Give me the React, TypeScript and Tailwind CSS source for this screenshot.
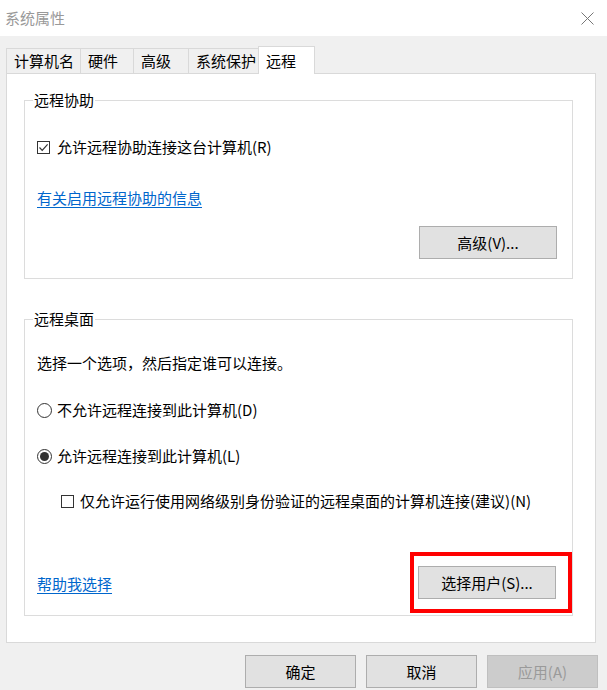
import React from 'react';

const font = { fontFamily: '"Noto Sans CJK SC", "Microsoft YaHei", sans-serif' };

const tabs = [
  { label: '计算机名', w: 'w-[74px]' },
  { label: '硬件', w: 'w-[53px]' },
  { label: '高级', w: 'w-[55px]' },
  { label: '系统保护', w: 'w-[70px]' },
];

const Button: React.FC<{ children: React.ReactNode; className?: string; disabled?: boolean }> = ({
  children,
  className = '',
  disabled = false,
}) => (
  <button
    className={`h-[33px] border text-[15px] leading-[20px] flex items-center justify-center ${
      disabled ? 'bg-[#cccccc] border-[#bfbfbf] text-[#9a9a9a]' : 'bg-[#e1e1e1] border-[#adadad] text-black'
    } ${className}`}
  >
    {children}
  </button>
);

const Checkbox: React.FC<{ checked?: boolean }> = ({ checked = false }) => (
  <span className="w-[13px] h-[13px] border border-[#333333] bg-white flex items-center justify-center shrink-0">
    {checked && (
      <svg width="11" height="11" viewBox="0 0 11 11">
        <path d="M1.5 5.5 L4.2 8.3 L9.6 2.3" fill="none" stroke="#333" strokeWidth="1.2" />
      </svg>
    )}
  </span>
);

const Radio: React.FC<{ checked?: boolean }> = ({ checked = false }) => (
  <span className="w-[15px] h-[15px] rounded-full border border-[#333333] bg-white flex items-center justify-center shrink-0">
    {checked && <span className="w-[9px] h-[9px] rounded-full bg-[#333333]" />}
  </span>
);

const GroupBox: React.FC<{ title: string; children: React.ReactNode }> = ({ title, children }) => (
  <fieldset className="w-[549px] border border-[#dcdcdc] px-[12px]">
    <legend className="ml-[-4px] px-[1px] text-[15px] leading-[20px] text-black">{title}</legend>
    {children}
  </fieldset>
);

export default function App() {
  return (
    <div className="w-[607px] h-[690px] bg-[#f0f0f0] overflow-hidden text-black" style={font}>
      {/* Title bar */}
      <div className="h-[36px] bg-white flex items-center justify-between pl-[5px] pr-[13px]">
        <span className="text-[15px] leading-[20px] text-[#999999]">系统属性</span>
        <svg width="13" height="13" viewBox="0 0 13 13">
          <path d="M0.5 0.5 L12.5 12.5 M12.5 0.5 L0.5 12.5" stroke="#777" strokeWidth="1" />
        </svg>
      </div>

      <div className="pt-[10px] px-[6px]">
        {/* Tabs */}
        <div className="relative z-10 flex items-end h-[27px] text-[15px] leading-[20px]">
          {tabs.map((t) => (
            <div
              key={t.label}
              className={`${t.w} h-[25px] border-t border-l border-[#d9d9d9] bg-[#f0f0f0] flex items-center pl-[7px]`}
            >
              {t.label}
            </div>
          ))}
          <div className="w-[57px] h-[28px] mb-[-1px] border-t border-l border-r border-[#d9d9d9] bg-white pl-[7px] pt-[4px]">
            远程
          </div>
        </div>

        {/* Panel */}
        <div className="w-[590px] h-[570px] border border-[#d9d9d9] bg-white pt-[16px] pl-[17px] text-[15px] leading-[20px]">
          <GroupBox title="远程协助">
            <div className="mt-[27px] flex items-center gap-[7px] h-[20px]">
              <Checkbox checked />
              <span>允许远程协助连接这台计算机(R)</span>
            </div>
            <div className="mt-[31px] h-[20px]">
              <span className="text-[#0066cc] underline underline-offset-[3px]">有关启用远程协助的信息</span>
            </div>
            <div className="mt-[18px] pb-[19px] flex justify-end pr-[3px]">
              <Button className="w-[138px]">高级(V)...</Button>
            </div>
          </GroupBox>

          <div className="h-[30px]" />

          <GroupBox title="远程桌面">
            <div className="mt-[24px] h-[20px]">选择一个选项，然后指定谁可以连接。</div>
            <div className="mt-[27px] flex items-center gap-[5px] h-[20px]">
              <Radio />
              <span>不允许远程连接到此计算机(D)</span>
            </div>
            <div className="mt-[26px] flex items-center gap-[5px] h-[20px]">
              <Radio checked />
              <span>允许远程连接到此计算机(L)</span>
            </div>
            <div className="mt-[25px] ml-[24px] flex items-center gap-[6px] h-[20px]">
              <Checkbox />
              <span>仅允许运行使用网络级别身份验证的远程桌面的计算机连接(建议)(N)</span>
            </div>
            <div className="mt-[41px] pb-[2px] flex items-center justify-between -mr-[12px]">
              <span className="text-[#0066cc] underline underline-offset-[3px] mt-[3px]">帮助我选择</span>
              <div className="w-[162px] h-[61px] border-[4px] border-[#ff0000] pl-[4px] pt-[10px]">
                <Button className="w-[138px]">选择用户(S)...</Button>
              </div>
            </div>
          </GroupBox>
        </div>

        {/* Footer buttons */}
        <div className="mt-[12px] flex justify-end gap-[10px] pr-[3px]">
          <Button className="w-[111px]">确定</Button>
          <Button className="w-[111px]">取消</Button>
          <Button className="w-[111px]" disabled>
            应用(A)
          </Button>
        </div>
      </div>
    </div>
  );
}
